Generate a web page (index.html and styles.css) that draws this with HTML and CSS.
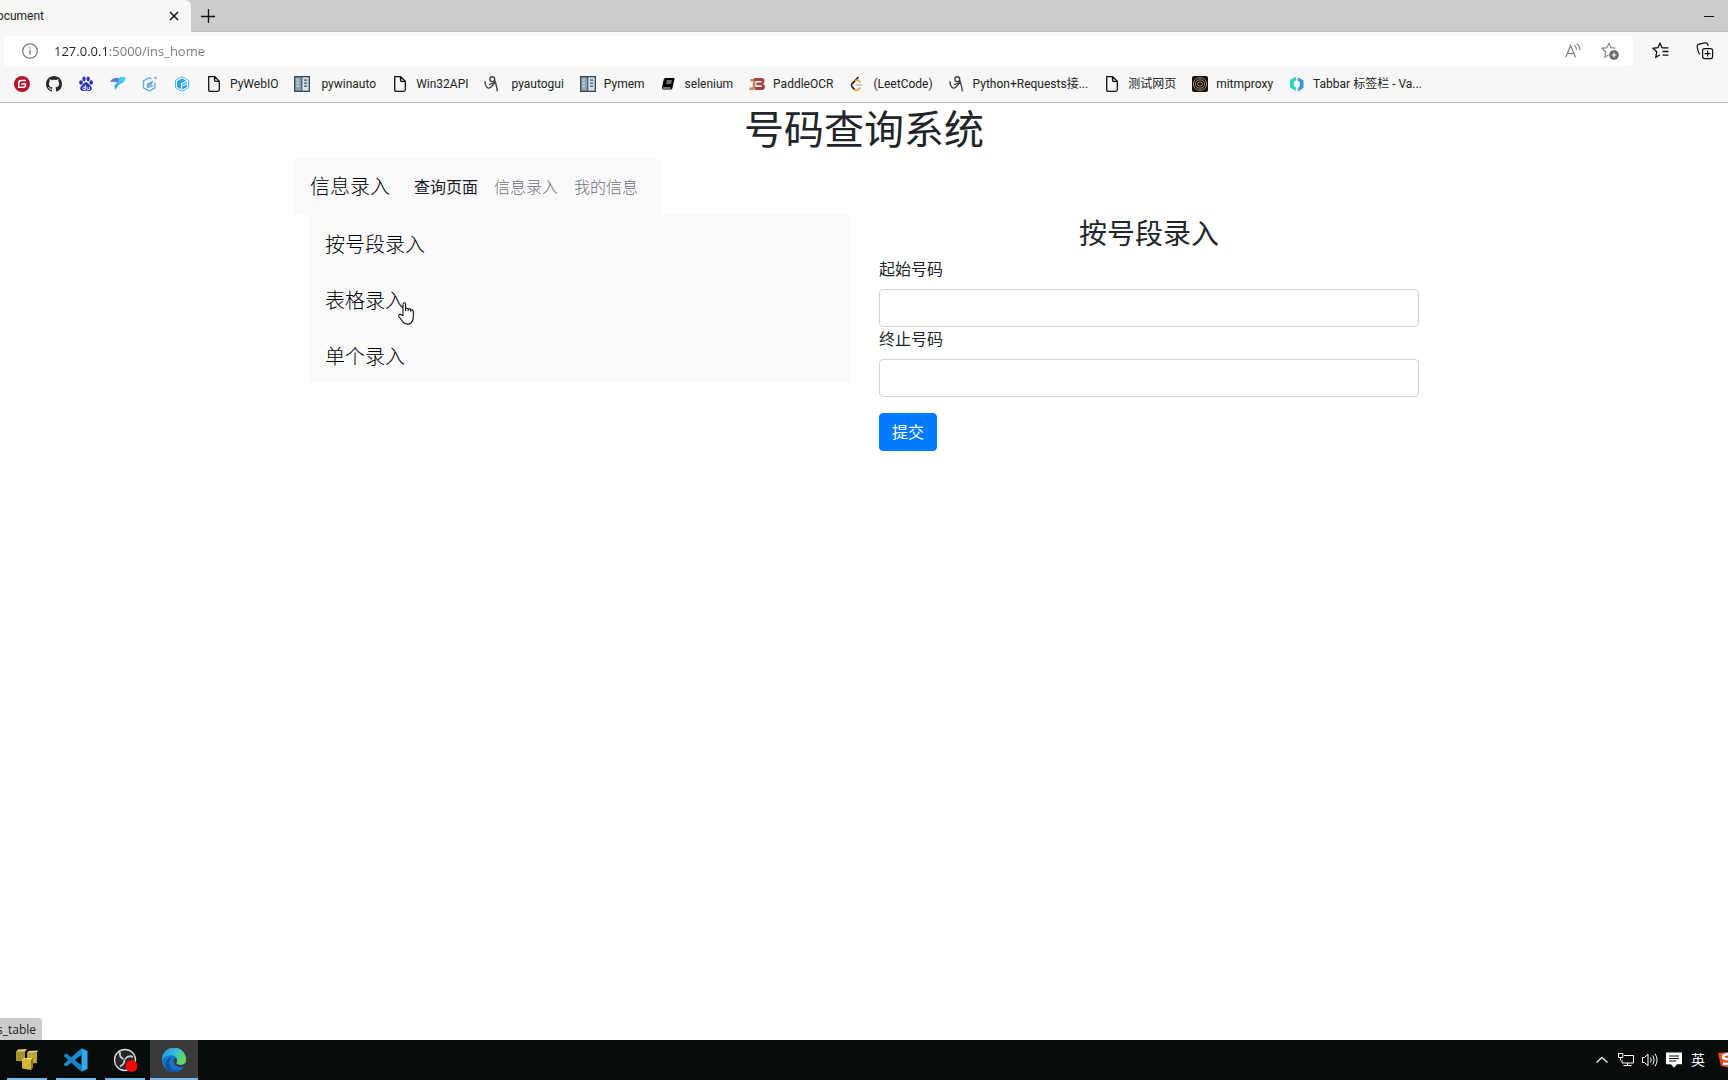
FILE: index.html
```html
<!DOCTYPE html>
<html lang="zh-CN">
<head>
<meta charset="utf-8">
<title>Document</title>
<link rel="stylesheet" href="styles.css">
</head>
<body>
<svg class="defs" aria-hidden="true">
  <symbol id="file" viewBox="0 0 16 16"><path d="M2.7.7h6.1l4.5 4.5v8.6q0 1.5-1.5 1.5H4.2q-1.5 0-1.5-1.5ZM8.5.9v3.3q0 1.2 1.2 1.2h3.4" fill="none" stroke="#111" stroke-width="1.3"/></symbol>
  <symbol id="book" viewBox="0 0 16 16"><path d="M0 0h16v16H0z" fill="#35495c"/><path d="M1.3 1.3h6v13.4h-6z" fill="#8ea2b0"/><path d="M8.3 1.3h6.4v13.4H8.3z" fill="#d4dee4"/><path d="M2.7 4h2M2.7 7h2M2.7 10h2" stroke="#d9e4ea" stroke-width="1.6"/><path d="M10 4.2h3.2M10 7.2h3.2M10 10.2h3.2" stroke="#456" stroke-width="1.3"/></symbol>
  <symbol id="script" viewBox="0 0 16 16"><g fill="none" stroke="#444" stroke-width="1.400" stroke-linecap="round"><circle cx="8.300" cy="3.200" r="2.400"/><path d="M1 5.500c0 5.500 3 8 5.800 5.800C9 9.500 10 7.500 10.700 4.500M5.500 8.600c3-1.800 5.200-1.600 6.500-.9M10.700 4.600c1.500 3.600 2.200 6.600 2.600 10.200"/></g></symbol>
</svg>

<header class="browser">
  <div class="tabs">
    <div class="tab">
      <span class="tab-title">Document</span>
      <button class="icon-btn" aria-label="关闭标签页"><svg width="10" height="10" viewBox="0 0 10 10"><path d="m1 1 8 8m0-8L1 9" stroke="#111" stroke-width="1.5"/></svg></button>
    </div>
    <button class="icon-btn new-tab" aria-label="新建标签页"><svg width="14" height="14" viewBox="0 0 14 14"><path d="M0 7.500h14M7.500 0v14" stroke="#111" stroke-width="1.300"/></svg></button>
    <button class="icon-btn minimize" aria-label="最小化"><svg width="10" height="10" viewBox="0 0 10 10"><path d="M0 5.500h10" stroke="#111"/></svg></button>
  </div>

  <div class="toolbar">
    <div class="address">
      <svg width="16" height="16" viewBox="0 0 16 16"><circle cx="8" cy="8" r="7.300" fill="none" stroke="#666" stroke-width="1.100"/><path d="M8 7v4.500M8 4.300v1.300" stroke="#666" stroke-width="1.200"/></svg>
      <input class="url" type="text" value="127.0.0.1:5000/ins_home" aria-label="地址">
      <button class="icon-btn" aria-label="大声朗读"><svg width="16" height="16" viewBox="0 0 16 16"><g fill="none" stroke="#777" stroke-width="1.100"><path d="M.7 14.500 5.600 2.500l4.900 12M2.300 10.500h6.600"/><path d="M9.500 2.500q2 1.500 1.900 4.200M11.800.800q3.300 2.400 3 6.300"/></g></svg></button>
      <button class="icon-btn" aria-label="收藏此页"><svg width="18" height="18" viewBox="0 0 18 18"><path d="M14.300 6.200 9.900 5.600 8 1.300 5.900 5.600l-4.900.7 3.700 3.500-.9 5.400 3.700-2.100" fill="none" stroke="#888" stroke-width="1.200"/><circle cx="13" cy="13" r="4.800" fill="#666"/><path d="M10.500 13h5M13 10.500v5" stroke="#fff" stroke-width="1.200"/></svg></button>
    </div>
    <div class="tools">
      <button class="icon-btn" aria-label="收藏夹"><svg width="18" height="18" viewBox="0 0 18 18"><path d="M10.500 5.500H9.900L8 1.300 5.900 5.600l-4.900.7 3.700 3.500-.9 5.400 4.200-2.400M10.500 5.800h6M10.500 9.500h6M10.500 13.200h6" fill="none" stroke="#111" stroke-width="1.300"/></svg></button>
      <button class="icon-btn" aria-label="集锦"><svg width="18" height="18" viewBox="0 0 18 18"><g fill="none" stroke="#111" stroke-width="1.200"><rect x="6.600" y="6.600" width="10" height="10" rx="2"/><path d="M8.600 11.600h6M11.600 8.600v6M4 12.300Q2.600 11.500 2.300 10L1.200 4.900Q.9 2.700 3 2.200L9 .9q2.400-.5 2.900 1.600l.3 1.500"/></g></svg></button>
    </div>
  </div>

  <nav class="bookmarks" aria-label="收藏夹栏">
    <a href="#" aria-label="Gitee"><svg viewBox="0 0 16 16"><circle cx="8" cy="8" r="8" fill="#b5152b"/><path d="M12 4.500H7.200Q4.700 4.500 4.700 7v4.300h4.600q2.200 0 2.200-2.300V8H7.300" fill="none" stroke="#fff" stroke-width="1.500"/></svg></a>
    <a href="#" aria-label="GitHub"><svg viewBox="0 0 16 16"><path fill="#24292f" d="M8 0C3.580 0 0 3.580 0 8c0 3.540 2.290 6.530 5.470 7.590.4.070.55-.17.55-.38 0-.19-.01-.82-.01-1.490-2.010.37-2.530-.49-2.690-.94-.09-.23-.48-.94-.82-1.130-.28-.15-.68-.52-.01-.53.63-.01 1.080.58 1.230.82.72 1.210 1.870.87 2.330.66.07-.52.28-.87.51-1.070-1.780-.2-3.640-.89-3.640-3.950 0-.87.31-1.590.82-2.150-.08-.2-.36-1.020.08-2.120 0 0 .67-.21 2.200.82.64-.18 1.320-.27 2-.27s1.360.09 2 .27c1.530-1.040 2.200-.82 2.200-.82.44 1.100.16 1.920.08 2.120.51.56.82 1.270.82 2.150 0 3.070-1.870 3.750-3.650 3.950.29.25.54.73.54 1.480 0 1.070-.01 1.930-.01 2.200 0 .21.15.46.55.38A8.010 8.010 0 0 0 16 8c0-4.420-3.580-8-8-8Z"/></svg></a>
    <a href="#" aria-label="百度"><svg viewBox="0 0 16 16"><g fill="#3033b8"><ellipse cx="3" cy="6.500" rx="1.800" ry="2.300"/><ellipse cx="6" cy="3" rx="1.700" ry="2.400"/><ellipse cx="10.200" cy="3" rx="1.700" ry="2.400"/><ellipse cx="13.200" cy="6.500" rx="1.800" ry="2.300"/><path d="M8 6.300c2.200 0 2.800 2 4.300 3.300 2.800 2.400 1.300 5.900-1.600 5.400-1.900-.4-3.500-.4-5.400 0-2.900.5-4.400-3-1.600-5.400C5.200 8.300 5.800 6.300 8 6.300Z"/></g><path d="M7.300 9v4.500H5.800q-1 0-1-1.200t1-1.200h1.500M9 10.800v1.700q0 1 1 1h1.400v-2.700" fill="none" stroke="#fff" stroke-width=".9"/></svg></a>
    <a href="#" aria-label="飞鸟"><svg viewBox="0 0 16 16"><path d="M0 5.500Q3 1.500 8.500 2.200L12 1l3.500.8-1 3Q13 7.500 9 8.300L5 14 4.300 9.500 7.500 6.500Z" fill="#38a9ef"/><path d="M0 5.500Q3 1.500 8.500 2.200L7.500 5.500Z" fill="#7a72dd"/><path d="M8.500 2.200 12 1l3.500.8-1 3L9 7Z" fill="#3bd5e3"/></svg></a>
    <a href="#" aria-label="方块"><svg viewBox="0 0 16 16"><g fill="none" stroke="#63a7e6" stroke-width="1.400"><path d="M9.500 2.800 7.200 1.700 1.500 5v6.800L7.200 15l5.700-3.200V6.500"/><path d="m11 5.500-5.500 2.700v3.300l5.500-2M5.500 9.500 10 7.500"/></g><circle cx="13.500" cy="2" r="1.300" fill="#75aadd"/></svg></a>
    <a href="#" aria-label="立方"><svg viewBox="0 0 16 16"><path d="m8 .7 6.500 3.700v7.300L8 15.300l-6.500-3.600V4.400Z" fill="#fff" stroke="#54b8ef"/><path d="m8 2.300 5 2.900v5.700l-5 2.900-5-2.900V5.200Z" fill="#2ba4eb"/><path d="m13 5.200-5.500 2.500V13M7.500 10.200 13 7.700" fill="none" stroke="#fff" stroke-width="1.100"/></svg></a>
    <a href="#"><svg><use href="#file"/></svg>PyWebIO</a>
    <a href="#"><svg><use href="#book"/></svg><span class="indent">pywinauto</span></a>
    <a href="#"><svg><use href="#file"/></svg>Win32API</a>
    <a href="#"><svg><use href="#script"/></svg><span class="indent">pyautogui</span></a>
    <a href="#"><svg><use href="#book"/></svg>Pymem</a>
    <a href="#"><svg viewBox="0 0 16 16"><path d="M4.500 2h8.200q1 0 .8 1l-2.200 9.500q-.3 1-1.300 1H2.500q-1.800 0-1.500-1.800L2.700 3.500Q3 2 4.500 2Z" fill="#000"/><path d="M5.800 5h5M5.300 7h5M2 12h7.500" stroke="#fff" stroke-width=".9"/></svg>selenium</a>
    <a href="#"><svg viewBox="0 0 16 16"><path d="M1.500 3h5v7.500Q6.500 14 3 14H.5v-2.500h2q1.300 0 1.300-1.500V5.500H1.500Z" fill="#c18565"/><path d="M5 2h7.500Q15.500 2 15.500 5 15.500 7 14 7.700q2 .8 2 3 0 3.300-3.500 3.300H6v-3h6q1 0 1-.9t-1-.9H7.500V6.500H12q.8 0 .8-.8T12 5H5Z" fill="#a6403b"/></svg>PaddleOCR</a>
    <a href="#"><svg viewBox="0 0 16 16"><path d="M9.500 1 3 7.800q-1.300 1.500 0 3l2.700 2.800" fill="none" stroke="#222" stroke-width="1.700"/><path d="M5.500 13.500q1.800 1.700 3.800.2l2-2M6 5l.8-.6Q8.500 3.600 10 5l1.300 1.200" fill="none" stroke="#eea52c" stroke-width="1.700"/><path d="M6.800 9h6.500" stroke="#bbb" stroke-width="1.500"/></svg>(LeetCode)</a>
    <a href="#"><svg><use href="#script"/></svg>Python+Requests接...</a>
    <a href="#"><svg><use href="#file"/></svg>测试网页</a>
    <a href="#"><svg viewBox="0 0 16 16"><rect width="16" height="16" rx="2" fill="#17120f"/><g fill="none" stroke="#a08b74" stroke-width="1"><ellipse cx="8" cy="8" rx="6.700" ry="6.300"/><ellipse cx="8" cy="8" rx="4.700" ry="4.200"/><ellipse cx="8" cy="8" rx="2.500" ry="2"/></g></svg>mitmproxy</a>
    <a href="#"><svg viewBox="0 0 16 16"><path d="m6.500.8 1 3.500-2.600 1.500V10l2.600 1.700-1 3L1 11.500V4Z" fill="#32d2b6"/><path d="m9 1.500 5.500 2.800V12l-6 3.500 1-4 1.400-1.300V6L8.500 4.500Z" fill="#3497db"/></svg>Tabbar 标签栏 - Va...</a>
  </nav>
</header>

<main class="page">
  <div class="container">
    <h1>号码查询系统</h1>
    <nav class="navbar">
      <a class="brand" href="#">信息录入</a>
      <a class="nav-link active" href="#">查询页面</a>
      <a class="nav-link" href="#">信息录入</a>
      <a class="nav-link" href="#">我的信息</a>
    </nav>
    <div class="columns">
      <nav class="menu">
        <a class="brand" href="#">按号段录入</a>
        <a class="brand" href="#">表格录入<svg class="cursor" width="18" height="24" viewBox="0 0 18 24"><path d="M5 13.500V2.300Q5 .8 6.300.8t1.300 1.500V9 7.500q0-1.300 1.200-1.300T10.200 7.500V9 7.800q0-1.200 1.200-1.200t1.300 1.200v2-.8q0-1.100 1.200-1.100t1.400 1.200V15q0 4.200-2.500 6-3.300 2.300-7-.2Q3.500 18.300 1 14.500q-.8-1.500.4-2 1.300-.4 2.300.7Z" fill="#fff" stroke="#111" stroke-width="1.100"/></svg></a>
        <a class="brand" href="#">单个录入</a>
      </nav>
      <form class="entry">
        <h2>按号段录入</h2>
        <label for="start">起始号码</label>
        <input id="start" type="text">
        <label for="end">终止号码</label>
        <input id="end" type="text">
        <button class="submit" type="button">提交</button>
      </form>
    </div>
  </div>
  <div class="status">ins_table</div>
</main>

<footer class="taskbar">
  <button class="task" aria-label="数据库"><svg width="24" height="24" viewBox="0 0 24 24"><path d="M1 3.500 10 1.500v12l-9-.5Z" fill="#a89332"/><path d="m1 3.500 2-2 9-.5-2 2.500Z" fill="#e2cf72"/><path d="m12 5 10-.5V15l-10 1Z" fill="#bba43a"/><path d="m12 5 2-2 9-.5-1 2Z" fill="#eadb84"/><path d="M7 11.500h9V22l-9-1.500Z" fill="#d3b636"/><path d="m7 11.500 2-1.500h9l-2 1.500Z" fill="#f4e590"/><path d="m16 11.500 2-1.500v10l-2 2Z" fill="#8b7722"/></svg></button>
  <button class="task" aria-label="Visual Studio Code"><svg width="24" height="24" viewBox="0 0 24 24"><path d="m17.500.2 6 2.700v18.200l-6 2.700Z" fill="#31a9ee"/><path d="M17.500.2 0 15.800q-.5.500 0 1l1.600 1.500q.5.400 1.100 0L18 6.500Z" fill="#2489ca"/><path d="M17.500 23.800 0 8.200q-.5-.5 0-1l1.600-1.500q.5-.4 1.100 0L18 17.500Z" fill="#1b80c4"/></svg></button>
  <button class="task" aria-label="OBS"><svg width="24" height="24" viewBox="0 0 24 24"><circle cx="12" cy="12" r="10.500" fill="#28252b" stroke="#ddd" stroke-width="1.300"/><g fill="none" stroke="#c8c8c8" stroke-width="1.900"><path d="M7 4q-1 5 3.500 7M20 9q-4.500-2.200-8 2M7 18.500q5-2.500 4.300-7"/></g><circle cx="18.500" cy="18" r="6" fill="#f60606"/></svg></button>
  <button class="task current" aria-label="Microsoft Edge"><svg width="24" height="24" viewBox="0 0 24 24"><defs><linearGradient id="eg" x1="0" x2="1" y1=".2" y2=".6"><stop stop-color="#258fe0"/><stop offset=".5" stop-color="#33bed5"/><stop offset="1" stop-color="#6bd850"/></linearGradient></defs><circle cx="12" cy="12" r="12" fill="#1874c9"/><path d="M0 12A12 12 0 0 1 24 11Q24 17 18.500 17 15 17 14 15.200 15.800 13 15 11 13.500 7.500 9 7.200 3.500 7.200 0 12Z" fill="url(#eg)"/><path d="M9 10Q5 15.500 9.500 20.500q5 4 12-.8Q17 24.500 11 24 2.500 22.500 3.500 15 4.800 10.500 9 10Z" fill="#124fa3"/><path d="M14.500 10.500q-2.500-.7-3 2 0 5 5.500 6.500 3 .5 5.500-.8l1.300-3q-2.300 2-5.300 1.800-3.500 0-4.500-1.800 1.700-2.400.5-4.700Z" fill="#3a3a3a"/></svg></button>
  <div class="tray">
    <button class="tray-btn" aria-label="显示隐藏的图标"><svg width="12" height="12" viewBox="0 0 12 12"><path d="m.5 8.500 5.500-5 5.500 5" fill="none" stroke="#eee" stroke-width="1.400"/></svg></button>
    <button class="tray-btn" aria-label="网络"><svg width="16" height="16" viewBox="0 0 16 16"><path d="M6 3.500h9.500v7.500H4V8M9.500 11v2.500M5.500 13.500h8M.5 1.500h4.300v4H.5ZM2.500 5.500v3" fill="none" stroke="#fff"/></svg></button>
    <button class="tray-btn" aria-label="音量"><svg width="16" height="16" viewBox="0 0 16 16"><path d="M.5 5.500h2L6 2.200v11.600L2.500 10.500h-2ZM8.500 5.500q1.500 2.500 0 5M10.800 3.500q2.900 4.500 0 9M13 1.700q4.200 6.300 0 12.600" fill="none" stroke="#fff"/></svg></button>
    <button class="tray-btn" aria-label="通知"><svg width="16" height="16" viewBox="0 0 16 16"><path d="M0 .5h16v11.800h-5L8 15.800l-3-3.500H0Z" fill="#fff"/><path d="M3 4h10M3 6.500h10M3 9h7" stroke="#111" stroke-width="1.100"/></svg></button>
    <button class="tray-btn">英</button>
    <button class="tray-btn ime" aria-label="输入法"><svg width="20" height="18" viewBox="0 0 20 18"><path d="M0 2 20 0v18L3 15Z" fill="#e94f24"/><path d="M16 3.500Q6 2.500 5 5.500 4.500 8 10 8.200q5 .3 4.500 3Q13 14 5 12.500" fill="none" stroke="#fff" stroke-width="2.400"/></svg></button>
  </div>
</footer>
</body>
</html>
```
FILE: styles.css
```css
* {
  box-sizing: border-box;
}

body {
  margin: 0;
  min-height: 100vh;
  display: flex;
  flex-direction: column;
  overflow-x: hidden;
  background: #fff;
  color: #212529;
  font: 16px/24px "Open Sans", "Noto Sans CJK SC", sans-serif;
}

a {
  color: inherit;
  text-decoration: none;
}

button,
input {
  font: inherit;
  color: inherit;
}

svg {
  display: block;
  flex: none;
}

.defs {
  position: absolute;
  width: 0;
  height: 0;
}

/* Browser chrome */
.browser {
  background: #f7f7f7;
  border-bottom: 1px solid #b8b8b8;
  color: #222;
  font-family: Roboto, "Noto Sans CJK SC", sans-serif;
  font-size: 12px;
  line-height: 16px;
}

.icon-btn {
  display: flex;
  padding: 0;
  border: 0;
  background: none;
}

.tabs {
  display: flex;
  align-items: center;
  height: 32px;
  background: #ccc;
  border-bottom: 1px solid #bdbdbd;
}

.tab {
  display: flex;
  align-items: center;
  justify-content: space-between;
  width: 191px;
  height: 32px;
  padding-right: 12px;
  background: #f7f7f7;
  border-radius: 0 6px 0 0;
}

.tab-title {
  display: flex;
  justify-content: flex-end;
  width: 44px;
  overflow: hidden;
}

.new-tab {
  margin-left: 10px;
}

.minimize {
  margin-left: auto;
  margin-right: 14px;
}

.toolbar {
  display: flex;
  align-items: center;
  padding: 4px 14px 2px 4px;
}

.address {
  flex: 1;
  display: flex;
  align-items: center;
  gap: 20px;
  height: 30px;
  padding: 0 14px 0 18px;
  background: #fff;
  border-radius: 4px;
}

.url {
  flex: 1;
  padding: 0;
  margin-left: -4px;
  border: 0;
  outline: 0;
  font-family: "Open Sans", sans-serif;
  font-size: 13px;
  line-height: 20px;
  background: linear-gradient(90deg, #222 53px, #777 53px);
  background-clip: text;
  -webkit-background-clip: text;
  -webkit-text-fill-color: transparent;
}

.tools {
  display: flex;
  gap: 26px;
  padding-left: 19px;
}

.bookmarks {
  display: flex;
  gap: 16px;
  height: 34px;
  padding: 0 14px 2px;
  align-items: center;
}

.bookmarks a {
  display: flex;
  align-items: center;
  gap: 8px;
  white-space: nowrap;
}

.bookmarks svg {
  width: 16px;
  height: 16px;
}

.indent {
  padding-left: 3px;
}

/* Page */
.page {
  flex: 1;
  position: relative;
}

.container {
  max-width: 1140px;
  margin: 0 auto;
}

h1 {
  margin: 0 0 4px;
  font-size: 40px;
  line-height: 52px;
  font-weight: 400;
  text-align: center;
}

.navbar {
  display: flex;
  align-items: center;
  width: fit-content;
  height: 56px;
  padding: 0 16px;
  background: #f9f9fb;
  font-weight: 300;
}

.navbar .brand {
  margin-right: 16px;
}

.brand {
  color: #000;
  font-size: 20px;
  line-height: 32px;
}

.nav-link {
  padding: 8px;
  color: #707070;
}

.nav-link.active {
  color: #1a1a1a;
  font-weight: 400;
}

.columns {
  display: grid;
  grid-template-columns: 1fr 1fr;
  gap: 30px;
  padding: 0 15px;
  align-items: start;
}

.menu {
  display: grid;
  background: #f9f9fb;
  font-weight: 300;
}

.menu .brand {
  position: relative;
  justify-self: start;
  margin-left: 16px;
  padding: 14px 0 10px;
}

.cursor {
  position: absolute;
  right: -11px;
  bottom: 1px;
}

.entry {
  display: flex;
  flex-direction: column;
}

h2 {
  margin: 0 0 6px;
  font-size: 28px;
  line-height: 36px;
  font-weight: 400;
  text-align: center;
}

.entry label {
  margin-bottom: 8px;
}

.entry input {
  height: 38px;
  padding: 6px 12px;
  border: 1px solid #ced4da;
  border-radius: 4px;
}

.submit {
  align-self: flex-start;
  margin-top: 16px;
  padding: 6px 12px;
  border: 1px solid #007bff;
  border-radius: 4px;
  background: #007bff;
  color: #fff;
}

.status {
  position: absolute;
  left: 0;
  bottom: 0;
  display: flex;
  justify-content: flex-end;
  width: 42px;
  height: 22px;
  padding-right: 6px;
  overflow: hidden;
  border-radius: 0 4px 0 0;
  background: #cbcbcb;
  color: #222;
  font-size: 12px;
  line-height: 24px;
}

/* Taskbar */
.taskbar {
  display: flex;
  gap: 1px;
  height: 40px;
  padding-left: 3px;
  background: #080c0a;
}

.task {
  display: grid;
  place-items: center;
  width: 48px;
  padding: 0;
  border: 0;
  background: linear-gradient(#76b9ed, #76b9ed) bottom / 40px 2px no-repeat;
}

.task.current {
  background: linear-gradient(#76b9ed, #76b9ed) bottom / 48px 2px no-repeat #3a3a3a;
}

.tray {
  display: flex;
  margin-left: auto;
}

.tray-btn {
  display: grid;
  place-items: center;
  width: 24px;
  padding: 0;
  border: 0;
  background: none;
  color: #fff;
  font-size: 14px;
}

.ime {
  width: 18px;
  padding-left: 8px;
  overflow: hidden;
  justify-content: start;
}
```
